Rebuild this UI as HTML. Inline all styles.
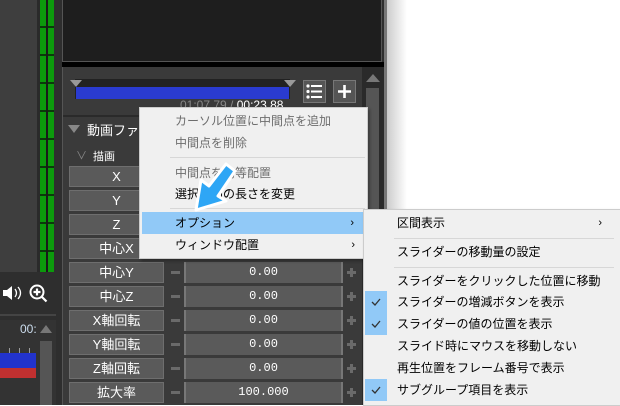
<!DOCTYPE html>
<html><head><meta charset="utf-8"><style>
*{margin:0;padding:0;box-sizing:border-box}
body{width:620px;height:405px;overflow:hidden;background:#fff;position:relative;font-family:"Liberation Sans","Noto Sans CJK JP",sans-serif}
.a{position:absolute}
.lbl{position:absolute;left:69px;width:95px;height:21px;background:#5a5a5a;border:1px solid #6e6e6e;color:#fff;font-size:13px;text-align:center;line-height:20px}
.val{position:absolute;left:184px;width:159px;height:21px;background:#5a5a5a;border-left:2px solid #777;border-right:2px solid #777;color:#fff;font-family:"Liberation Mono",monospace;font-size:12px;text-align:center;line-height:21px}
.mn{position:absolute;left:171px;width:9px;height:3px;background:#6a6a6a}
.pl{position:absolute;left:347px;width:9px;height:9px}
.pl:before{content:"";position:absolute;left:0;top:3px;width:9px;height:3px;background:#6a6a6a}
.pl:after{content:"";position:absolute;left:3px;top:0;width:3px;height:9px;background:#6a6a6a}
.menu{position:absolute;background:#f0f0f0;border:1px solid #ccc;box-shadow:2px 2px 3px rgba(0,0,0,.3);font-size:12px;color:#000}
.it{position:absolute;left:0;right:0;height:22px;line-height:22px}
.sep{position:absolute;height:1px;background:#d7d7d7}
.chk{position:absolute;left:1px;width:22px;height:22px;background:#91c9f7}
.arr{position:absolute;right:12px;font-size:11px}
</style></head><body>
<div class="a" style="left:0;top:0;width:384px;height:405px;background:#2e2e2e"></div>
<div class="a" style="left:384px;top:0;width:3px;height:405px;background:#777"></div>
<div class="a" style="left:387px;top:0;width:20px;height:405px;background:linear-gradient(90deg,#ccc,#fff)"></div>
<div class="a" style="left:0;top:0;width:37px;height:272px;background:#3e3e3e"></div>
<div class="a" style="left:37px;top:0;width:3px;height:272px;background:#2a2a2a"></div>
<div class="a" style="left:40px;top:0;width:14px;height:272px;background:repeating-linear-gradient(180deg,#0c9a0c 0 26px,#0a3a0a 26px 28px)"></div>
<div class="a" style="left:46px;top:0;width:2px;height:272px;background:#1a1a1a"></div>
<div class="a" style="left:0;top:272px;width:56px;height:44px;background:#2e2e2e;border-bottom:2px solid #444"></div>
<svg class="a" style="left:2px;top:285px" width="20" height="16"><path d="M1 5h4l5-4v14l-5-4H1z" fill="#fff"/><path d="M13 4q3 4 0 8M16 2q5 6 0 12" stroke="#fff" stroke-width="1.3" fill="none"/></svg>
<svg class="a" style="left:28px;top:283px" width="22" height="22"><circle cx="9" cy="9" r="6.5" fill="none" stroke="#fff" stroke-width="2"/><path d="M9 5.5v7M5.5 9h7M13.5 13.5l5 5" stroke="#fff" stroke-width="2.2"/></svg>
<div class="a" style="left:0;top:320px;width:56px;height:85px;background:#333"></div>
<div class="a" style="left:20px;top:322px;color:#cde;font-size:12px">00:</div>
<div class="a" style="left:0;top:337px;width:36px;height:18px;border-bottom:1px solid #888;background:repeating-linear-gradient(90deg,transparent 0 9px,#999 9px 10px) bottom/100% 6px no-repeat"></div>
<div class="a" style="left:0;top:353px;width:36px;height:17px;background:#2233cc"></div>
<div class="a" style="left:0;top:368px;width:36px;height:10px;background:#c03030"></div>
<div class="a" style="left:40px;top:325px;width:0;height:0;border-left:6px solid transparent;border-right:6px solid transparent;border-bottom:8px solid #777"></div>
<div class="a" style="left:40px;top:341px;width:12px;height:64px;background:#555"></div>
<div class="a" style="left:62px;top:0;width:320px;height:62px;background:#1e1e1e;border:1px solid #555;border-top:none"></div>
<div class="a" style="left:62px;top:62px;width:322px;height:5px;background:#000"></div>
<div class="a" style="left:62px;top:67px;width:300px;height:338px;background:#3a3a3a;border-left:1px solid #555"></div>
<div class="a" style="left:362px;top:67px;width:22px;height:338px;background:#2a2a2a"></div>
<div class="a" style="left:366px;top:74px;width:0;height:0;border-left:7px solid transparent;border-right:7px solid transparent;border-bottom:8px solid #777"></div>
<div class="a" style="left:366px;top:88px;width:13px;height:317px;background:#555"></div>
<div class="a" style="left:75px;top:79px;width:215px;height:20px;background:#222"></div>
<div class="a" style="left:76px;top:87px;width:213px;height:12px;background:#2a3bd0"></div>
<div class="a" style="left:70px;top:80px;border-left:6px solid transparent;border-right:6px solid transparent;border-top:7px solid #999"></div>
<div class="a" style="left:284px;top:80px;border-left:6px solid transparent;border-right:6px solid transparent;border-top:7px solid #999"></div>
<div class="a" style="left:303px;top:80px;width:23px;height:23px;background:#555;border:1px solid #777"></div>
<svg class="a" style="left:303px;top:80px" width="23" height="23"><g fill="#fff"><circle cx="5" cy="6" r="1.6"/><circle cx="5" cy="11.5" r="1.6"/><circle cx="5" cy="17" r="1.6"/><rect x="8" y="5" width="11" height="2"/><rect x="8" y="10.5" width="11" height="2"/><rect x="8" y="16" width="11" height="2"/></g></svg>
<div class="a" style="left:333px;top:80px;width:23px;height:23px;background:#555;border:1px solid #777"></div>
<svg class="a" style="left:333px;top:80px" width="23" height="23"><path d="M11.5 5v13M5 11.5h13" stroke="#fff" stroke-width="2.6"/></svg>
<div class="a" style="left:180px;top:98px;color:#888;font-size:12px;white-space:nowrap">01:07.79 / <span style="color:#fff">00:23.88</span></div>
<div class="a" style="left:63px;top:115px;width:299px;height:2px;background:#2a2a2a"></div>
<div class="a" style="left:68px;top:125px;border-left:6px solid transparent;border-right:6px solid transparent;border-top:8px solid #888"></div>
<div class="a" style="left:87px;top:120px;color:#fff;font-size:13px">動画ファイ</div>
<div class="a" style="left:76px;top:147px;color:#888;font-size:11px">&#8744;</div>
<div class="a" style="left:93px;top:148px;color:#fff;font-size:11px">描画</div>
<div class="lbl" style="top:166px">X</div>
<div class="lbl" style="top:190px">Y</div>
<div class="lbl" style="top:214px">Z</div>
<div class="lbl" style="top:238px">中心X</div>
<div class="lbl" style="top:262px">中心Y</div><div class="mn" style="top:271px"></div><div class="val" style="top:262px">0.00</div><div class="pl" style="top:268px"></div>
<div class="lbl" style="top:286px">中心Z</div><div class="mn" style="top:295px"></div><div class="val" style="top:286px">0.00</div><div class="pl" style="top:292px"></div>
<div class="lbl" style="top:310px">X軸回転</div><div class="mn" style="top:319px"></div><div class="val" style="top:310px">0.00</div><div class="pl" style="top:316px"></div>
<div class="lbl" style="top:334px">Y軸回転</div><div class="mn" style="top:343px"></div><div class="val" style="top:334px">0.00</div><div class="pl" style="top:340px"></div>
<div class="lbl" style="top:358px">Z軸回転</div><div class="mn" style="top:367px"></div><div class="val" style="top:358px">0.00</div><div class="pl" style="top:364px"></div>
<div class="lbl" style="top:382px">拡大率</div><div class="mn" style="top:391px"></div><div class="val" style="top:382px">100.000</div><div class="pl" style="top:388px"></div>
<div class="menu" style="left:139px;top:107px;width:229px;height:152px">
 <div class="it" style="top:2px;left:35px;color:#6d6d6d">カーソル位置に中間点を追加</div>
 <div class="it" style="top:24px;left:35px;color:#6d6d6d">中間点を削除</div>
 <div class="sep" style="top:49px;left:30px;right:2px"></div>
 <div class="it" style="top:54px;left:35px;color:#6d6d6d">中間点を均等配置</div>
 <div class="it" style="top:75px;left:35px">選択範囲の長さを変更</div>
 <div class="sep" style="top:100px;left:30px;right:2px"></div>
 <div class="it" style="top:104px;left:2px;right:1px;background:#91c9f7;padding-left:33px">オプション<span class="arr">›</span></div>
 <div class="it" style="top:126px;left:35px">ウィンドウ配置<span class="arr" style="right:12px">›</span></div>
</div>
<svg class="a" style="left:190px;top:160px" width="52" height="56"><path d="M36 4 L45 11 L28 36 L36 41 L6 50 L11 20 L19 26 Z" fill="#2ea6f5" stroke="#fff" stroke-width="3" stroke-linejoin="round"/></svg>
<div class="menu" style="left:363px;top:209px;width:258px;height:197px">
 <div class="it" style="top:2px;left:33px">区間表示<span class="arr" style="right:18px">›</span></div>
 <div class="sep" style="top:28px;left:30px;right:6px"></div>
 <div class="it" style="top:31px;left:33px">スライダーの移動量の設定</div>
 <div class="sep" style="top:57px;left:30px;right:6px"></div>
 <div class="it" style="top:60px;left:33px">スライダーをクリックした位置に移動</div>
 <div class="chk" style="top:81px"><svg width="22" height="22"><path d="M7 11l3 3 5-6" stroke="#333" stroke-width="1.3" fill="none"/></svg></div><div class="it" style="top:81px;left:33px">スライダーの増減ボタンを表示</div>
 <div class="chk" style="top:103px"><svg width="22" height="22"><path d="M7 11l3 3 5-6" stroke="#333" stroke-width="1.3" fill="none"/></svg></div><div class="it" style="top:103px;left:33px">スライダーの値の位置を表示</div>
 <div class="it" style="top:125px;left:33px">スライド時にマウスを移動しない</div>
 <div class="it" style="top:147px;left:33px">再生位置をフレーム番号で表示</div>
 <div class="chk" style="top:169px"><svg width="22" height="22"><path d="M7 11l3 3 5-6" stroke="#333" stroke-width="1.3" fill="none"/></svg></div><div class="it" style="top:169px;left:33px">サブグループ項目を表示</div>
</div>
</body></html>
